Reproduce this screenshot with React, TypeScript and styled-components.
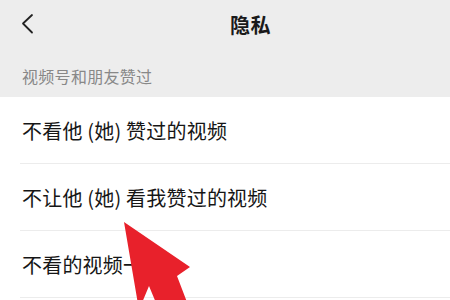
import React from "react";
import styled, { createGlobalStyle } from "styled-components";

const Global = createGlobalStyle`
  html, body { margin: 0; padding: 0; }
  body {
    width: 450px;
    height: 300px;
    overflow: hidden;
    background: #ffffff;
    font-family: "Noto Sans CJK SC", "Noto Sans", sans-serif;
  }
`;

const Page = styled.div`
  position: relative;
  width: 450px;
  height: 300px;
  overflow: hidden;
  background: #ffffff;
`;

const Top = styled.div`
  background: #ededed;
  display: flex;
  flex-direction: column;
  height: 97px;
`;

const NavBar = styled.div`
  height: 50px;
  display: flex;
  align-items: center;
  padding-left: 21px;
`;

const Back = styled.div`
  width: 14px;
  height: 22px;
  display: flex;
  align-items: center;
  margin-top: -2px;
`;

const Title = styled.div`
  margin-left: 195px;
  font-size: 20px;
  font-weight: 700;
  color: #1a1a1a;
  letter-spacing: 0.5px;
  margin-top: -2px;
`;

const SectionLabel = styled.div`
  padding: 14px 0 0 22px;
  font-size: 16px;
  color: #888888;
  letter-spacing: 0.3px;
`;

const List = styled.div`
  display: flex;
  flex-direction: column;
`;

const Row = styled.div`
  height: 67px;
  display: flex;
  align-items: center;
  padding-left: 22px;
  font-size: 20px;
  letter-spacing: 0.2px;
  color: #161616;
  position: relative;
  &::after {
    content: "";
    position: absolute;
    left: 20px;
    right: 0;
    bottom: 0;
    height: 1px;
    background: #ececec;
  }
`;

const Arrow = styled.svg`
  position: absolute;
  left: 0;
  top: 0;
  pointer-events: none;
`;

export default function App() {
  const rows = ["不看他 (她) 赞过的视频", "不让他 (她) 看我赞过的视频", "不看的视频一"];
  return (
    <Page>
      <Global />
      <Top>
        <NavBar>
          <Back>
            <svg width="14" height="22" viewBox="0 0 14 22">
              <path d="M11 2 L2 10.5 L11 19.5" fill="none" stroke="#222" strokeWidth="1.8" strokeLinecap="round" strokeLinejoin="round" />
            </svg>
          </Back>
          <Title>隐私</Title>
        </NavBar>
        <SectionLabel>视频号和朋友赞过</SectionLabel>
      </Top>
      <List>
        {rows.map((r) => (
          <Row key={r}>{r}</Row>
        ))}
      </List>
      <Arrow width="450" height="300" viewBox="0 0 450 300">
        <polygon
          points="124,222 190,267 177,276 190,310 159,310 149,286 139,310"
          fill="#e8212b"
        />
      </Arrow>
    </Page>
  );
}
